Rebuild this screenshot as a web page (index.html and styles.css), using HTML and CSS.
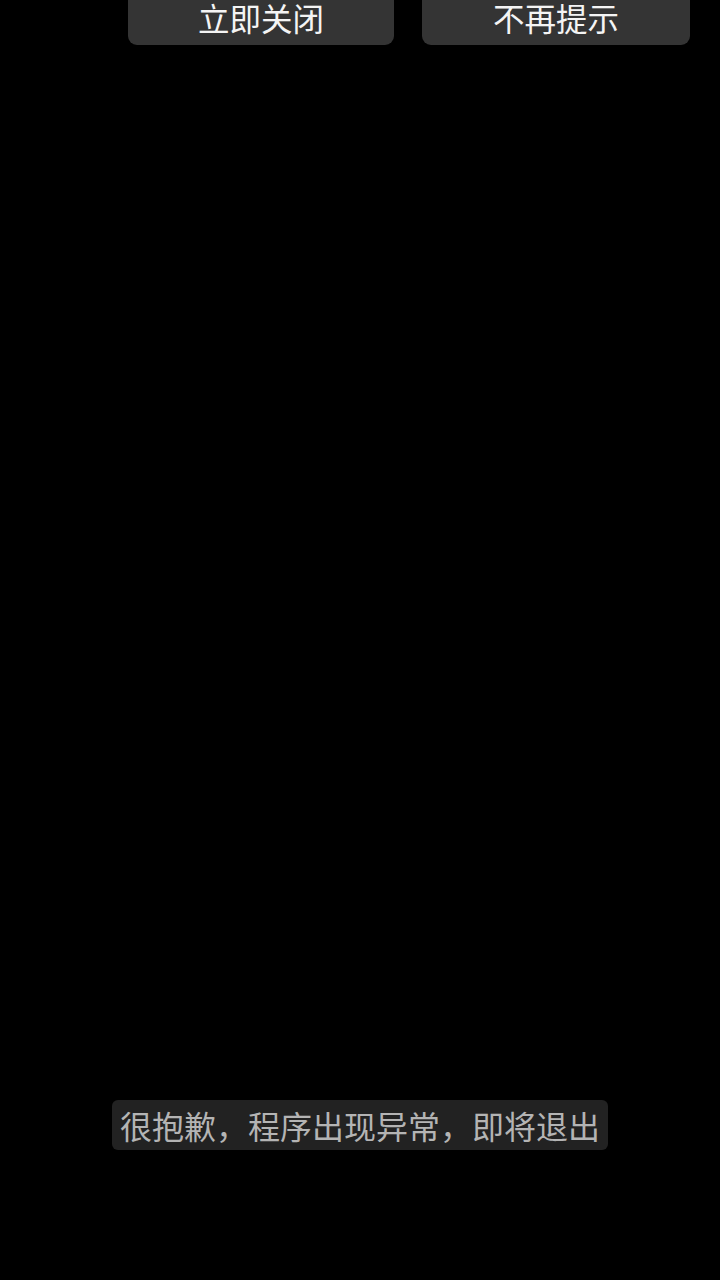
FILE: index.html
```html
<!DOCTYPE html>
<html lang="zh-CN">
<head>
<meta charset="utf-8">
<title>异常</title>
<link rel="stylesheet" href="styles.css">
</head>
<body>
<div class="screen">
  <div class="actions">
    <div class="btn btn-close">立即关闭</div>
    <div class="btn btn-never">不再提示</div>
  </div>
  <div class="toast">很抱歉，程序出现异常，即将退出</div>
</div>
</body>
</html>
```

FILE: styles.css
```css
html, body {
  margin: 0;
  padding: 0;
  background: #000;
}
.screen {
  width: 720px;
  height: 1280px;
  background: #000;
  font-family: "Noto Sans CJK SC", "Noto Sans", sans-serif;
  display: flex;
  flex-direction: column;
  overflow: hidden;
}
.actions {
  display: flex;
  gap: 28px;
  padding-left: 128px;
}
.btn {
  height: 45px;
  box-sizing: border-box;
  padding-bottom: 10px;
  line-height: 35px;
  background: #343434;
  color: #f4f4f4;
  font-size: 31.5px;
  text-align: center;
  border-radius: 0 0 9px 9px;
}
.btn-close { width: 266px; }
.btn-never { width: 268px; }
.toast {
  margin-top: 1055px;
  margin-left: 112px;
  align-self: flex-start;
  height: 50px;
  line-height: 50px;
  padding: 0 8px;
  background: #222;
  color: #b4b4b4;
  font-size: 32px;
  border-radius: 6px;
  white-space: nowrap;
}
```
